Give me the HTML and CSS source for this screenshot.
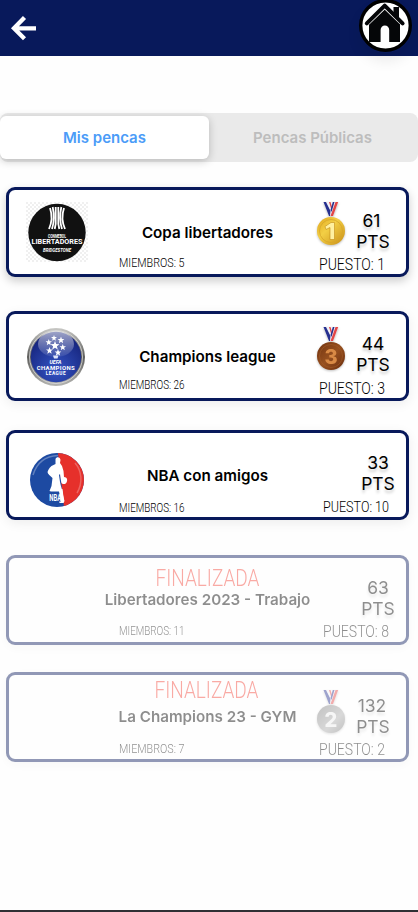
FILE: index.html
```html
<!DOCTYPE html>
<html lang="es">
<head>
<meta charset="utf-8">
<meta name="viewport" content="width=device-width, initial-scale=1">
<title>Mis pencas</title>
<link rel="stylesheet" href="styles.css">
</head>
<body>
<svg class="defs" aria-hidden="true">
  <defs>
    <linearGradient id="gold" x1="0" y1="0" x2="1" y2="1"><stop offset="0" stop-color="#dfa51c"/><stop offset=".4" stop-color="#f3cf45"/><stop offset="1" stop-color="#c98e16"/></linearGradient>
    <linearGradient id="bronze" x1="0" y1="0" x2="1" y2="1"><stop offset="0" stop-color="#70320f"/><stop offset=".5" stop-color="#97501f"/><stop offset="1" stop-color="#6b2d0d"/></linearGradient>
    <linearGradient id="silver" x1="0" y1="0" x2="1" y2="1"><stop offset="0" stop-color="#777"/><stop offset=".6" stop-color="#aaa"/><stop offset="1" stop-color="#777"/></linearGradient>
    <linearGradient id="steel" x1="0" y1="0" x2="0" y2="1"><stop offset="0" stop-color="#c9c9c6"/><stop offset=".5" stop-color="#5c5c5a"/><stop offset="1" stop-color="#b5b5b2"/></linearGradient>
    <linearGradient id="gloss" x1="0" y1="0" x2="0" y2="1"><stop offset="0" stop-color="#fff" stop-opacity=".6"/><stop offset="1" stop-color="#fff" stop-opacity=".08"/></linearGradient>
    <radialGradient id="blue" cx=".5" cy=".75" r=".7"><stop offset="0" stop-color="#3454c4"/><stop offset="1" stop-color="#16247c"/></radialGradient>
    <pattern id="checks" width="4" height="4" patternUnits="userSpaceOnUse"><path fill="#fff" d="M0 0h4v4H0z"/><path fill="#f0f0f0" d="M0 0h2v2H0zM2 2h2v2H2z"/></pattern>
    <clipPath id="ball"><circle cx="27" cy="27" r="27"/></clipPath>
    <symbol id="ribbon" viewBox="0 0 16 15">
      <path fill="#f2f2f6" d="M0.500 0h15L10 14H6z"/>
      <path fill="#e34646" d="M12.500 0h2.700L10 14H7.500z"/>
      <path fill="#e34646" d="M6 0h1.500l1.500 5-.8 2z"/>
      <path fill="#26308f" d="M.5 0H3l4.500 9-.5 5H6zM9.800 0h1.700L8.500 10 7.500 8z"/>
    </symbol>
    <symbol id="star" viewBox="0 0 10 10"><path fill="#fff" d="M5 0l1.300 3.400 3.700.1-2.900 2.300 1 3.700L5 7.400 1.900 9.500l1-3.700L0 3.500l3.700-.1z"/></symbol>
  </defs>
</svg>

<header class="bar">
  <a class="back" href="#" aria-label="Volver">
    <svg width="26" height="26" viewBox="0 0 26 26"><path d="M13.500 2.500L3 13.300l10.500 10.400M3 13.300h22" fill="none" stroke="#fff" stroke-width="4.300"/></svg>
  </a>
  <a class="home" href="#" aria-label="Inicio">
    <svg width="54" height="54" viewBox="0 0 54 54">
      <circle cx="26.500" cy="26.500" r="24.800" fill="#fff" stroke="#000" stroke-width="3.400"/>
      <path fill="#050608" d="M34.500 8h5.500v14l-5.500-5z"/>
      <path fill="#050608" d="M10 23.500L25.700 8 41 23.500V43H30.200V31a4.300 4.500 0 0 0-8.600 0V43H10z"/>
      <path d="M7.500 25.800L25.700 8.300l18.300 17.500" fill="none" stroke="#fff" stroke-width="3.600"/>
      <path d="M7.800 24.300L25.700 6.600 43.600 24.300" fill="none" stroke="#050608" stroke-width="4" stroke-linecap="round" stroke-linejoin="round"/>
    </svg>
  </a>
</header>

<nav class="tabs">
  <a class="tab tab-active" href="#">Mis pencas</a>
  <a class="tab" href="#">Pencas Públicas</a>
</nav>

<main class="list">
  <section class="card libertadores">
    <div class="logo">
      <svg width="62" height="60" viewBox="0 0 62 60">
        <path fill="url(#checks)" d="M0 0h62v60H0z"/>
        <circle cx="31" cy="30.500" r="28.700" fill="#111"/>
        <g fill="none" stroke="#fff" stroke-width="1.800"><path d="M24 6c2 6 3 12-1 21M26.700 5c1.500 7 1.500 15-.7 22M29.700 5v17l-1 5M32.300 5v17l1 5M35.300 5c-1.500 7-1.500 15 .7 22M38 6c-2 6-3 12 1 21"/></g>
        <text class="logo-text" x="31" y="35.500" font-size="4.500" textLength="18" lengthAdjust="spacingAndGlyphs">CONMEBOL</text>
        <text class="logo-text" x="31" y="42.300" font-size="7" textLength="51" lengthAdjust="spacingAndGlyphs">LIBERTADORES</text>
        <text class="logo-text logo-script" x="31" y="49.500" font-size="5.500" textLength="28" lengthAdjust="spacingAndGlyphs">BRIDGESTONE</text>
      </svg>
    </div>
    <div class="info">
      <h2 class="title">Copa libertadores</h2>
      <svg class="members" width="66" height="14"><text class="narrow" x="0" y="12" font-size="13.500" textLength="65.500" lengthAdjust="spacingAndGlyphs">MIEMBROS: 5</text></svg>
    </div>
    <div class="score">
      <svg class="medal" width="28" height="45" viewBox="0 0 28 45"><use href="#ribbon" x="6" y="0" width="16" height="15"/><circle cx="14" cy="29" r="14" fill="url(#gold)"/><circle cx="14" cy="29" r="11.500" fill="none" stroke="#d6a62a" stroke-width=".8"/><path fill="#fff0a0" stroke="#c18b17" stroke-width=".6" d="M8 24.500l6-4h3.500v17h-4.500V25.500l-4 2z"/></svg>
      <p class="points">61<br>PTS</p>
      <svg class="rank" width="67" height="17"><text class="narrow" x="0" y="14.500" font-size="16.500" textLength="66" lengthAdjust="spacingAndGlyphs">PUESTO: 1</text></svg>
    </div>
  </section>

  <section class="card champions">
    <div class="logo">
      <svg width="60" height="60" viewBox="0 0 60 60">
        <circle cx="30" cy="30" r="29" fill="url(#steel)"/><circle cx="30" cy="30" r="26.500" fill="none" stroke="#ddd" stroke-width=".8"/>
        <circle cx="30" cy="30" r="25.200" fill="url(#blue)"/>
        <ellipse cx="30" cy="17" rx="18" ry="13" fill="url(#gloss)"/>
        <use href="#star" x="24.500" y="14" width="9" height="9"/><use href="#star" x="19.500" y="12" width="6.500" height="6.500"/><use href="#star" x="31.500" y="9.500" width="7" height="7"/><use href="#star" x="25" y="8" width="6" height="6"/><use href="#star" x="33.500" y="17" width="6.500" height="6.500"/><use href="#star" x="20" y="20" width="7" height="7"/><use href="#star" x="28.500" y="22" width="7" height="7"/>
        <path d="M27 28.500h5.500l-1 3h-3.500z" fill="#dfe5fa"/>
        <text class="logo-text logo-script" x="29.500" y="36.500" font-size="5.500" textLength="12" lengthAdjust="spacingAndGlyphs">UEFA</text>
        <text class="logo-text" x="29.700" y="42.700" font-size="6" textLength="38" lengthAdjust="spacing">CHAMPIONS</text>
        <text class="logo-text" x="29.700" y="47.700" font-size="4.800" textLength="20" lengthAdjust="spacing">LEAGUE</text>
      </svg>
    </div>
    <div class="info">
      <h2 class="title">Champions league</h2>
      <svg class="members" width="66" height="14"><text class="narrow" x="0" y="12" font-size="13" textLength="65.500" lengthAdjust="spacingAndGlyphs">MIEMBROS: 26</text></svg>
    </div>
    <div class="score">
      <svg class="medal" width="28" height="45" viewBox="0 0 28 45"><use href="#ribbon" x="6" y="0" width="16" height="15"/><circle cx="14" cy="29" r="14" fill="url(#bronze)"/><circle cx="14" cy="29" r="11.500" fill="none" stroke="#a25c29" stroke-width=".6"/><text class="medal-number" x="14" y="36.500" fill="#d98a45">3</text></svg>
      <p class="points">44<br>PTS</p>
      <svg class="rank" width="67" height="17"><text class="narrow" x="0" y="14.500" font-size="16.500" textLength="66" lengthAdjust="spacingAndGlyphs">PUESTO: 3</text></svg>
    </div>
  </section>

  <section class="card nba">
    <div class="logo">
      <svg width="54" height="54" viewBox="0 0 54 54">
        <g clip-path="url(#ball)"><path fill="#1d4aa2" d="M0 0h54v54H0z"/><path fill="#e6302b" d="M28 0h26v54H34z"/>
        <path fill="#fff" d="M25.500 6c1-3 5-2 5 1l-.5 3 2 3 1.500 5 .5 6c3 0 4 3 2.500 5.500-1 2-4 2-5 .5l-.5-2-1-7-1 1 1 7c1 5 2.500 8 3 13l1.500 6-1 2h-4l-1-6-9-6 2-5 1-8c-2-2-5-4-5-6 1-3 3-6 6-7l2-1z"/>
        <path fill="#1d4aa2" d="M10 38.500h19l2 10H10z"/><path fill="#fff" d="M29.500 36h3l1.500 12-1 2h-2z"/></g>
        <path d="M3 22C7 9 16 3 28 2.500" fill="none" stroke="#fff" stroke-opacity=".3" stroke-width="1.500"/>
        <path d="M45 10c7 8 8 20 2 30" fill="none" stroke="#fff" stroke-opacity=".25" stroke-width="1.500"/>
        <text class="logo-text" x="25.300" y="47.500" font-size="8.500" textLength="12" lengthAdjust="spacingAndGlyphs">NBA</text>
      </svg>
    </div>
    <div class="info">
      <h2 class="title">NBA con amigos</h2>
      <svg class="members" width="66" height="14"><text class="narrow" x="0" y="12" font-size="13" textLength="65.500" lengthAdjust="spacingAndGlyphs">MIEMBROS: 16</text></svg>
    </div>
    <div class="score">
      <p class="points">33<br>PTS</p>
      <svg class="rank" width="67" height="17"><text class="narrow" x="0" y="14.500" font-size="15.500" textLength="66" lengthAdjust="spacingAndGlyphs">PUESTO: 10</text></svg>
    </div>
  </section>

  <section class="card trabajo finished">
    <div class="info">
      <svg class="status" width="105" height="22"><text class="narrow" x="0.500" y="20" font-size="24.500" textLength="104" lengthAdjust="spacingAndGlyphs">FINALIZADA</text></svg>
      <h2 class="title">Libertadores 2023 - Trabajo</h2>
      <svg class="members" width="66" height="14"><text class="narrow" x="0" y="12" font-size="13" textLength="65.500" lengthAdjust="spacingAndGlyphs">MIEMBROS: 11</text></svg>
    </div>
    <div class="score">
      <p class="points">63<br>PTS</p>
      <svg class="rank" width="67" height="17"><text class="narrow" x="0" y="14.500" font-size="16.500" textLength="66" lengthAdjust="spacingAndGlyphs">PUESTO: 8</text></svg>
    </div>
  </section>

  <section class="card gym finished">
    <div class="info">
      <svg class="status" width="105" height="22"><text class="narrow" x="-0.500" y="20" font-size="24.500" textLength="104" lengthAdjust="spacingAndGlyphs">FINALIZADA</text></svg>
      <h2 class="title">La Champions 23 - GYM</h2>
      <svg class="members" width="66" height="14"><text class="narrow" x="0" y="12" font-size="13.500" textLength="65.500" lengthAdjust="spacingAndGlyphs">MIEMBROS: 7</text></svg>
    </div>
    <div class="score">
      <svg class="medal" width="28" height="45" viewBox="0 0 28 45"><use href="#ribbon" x="6" y="0" width="16" height="15"/><circle cx="14" cy="29" r="14" fill="url(#silver)"/><text class="medal-number" x="14" y="36.500" fill="#eee">2</text></svg>
      <p class="points">132<br>PTS</p>
      <svg class="rank" width="67" height="17"><text class="narrow" x="0" y="14.500" font-size="16.500" textLength="66" lengthAdjust="spacingAndGlyphs">PUESTO: 2</text></svg>
    </div>
  </section>
</main>
</body>
</html>
```
FILE: styles.css
```css
* { box-sizing: border-box; }

body {
  margin: 0;
  height: 912px;
  overflow: hidden;
  background: #fefefe;
  border-bottom: 2px solid #303034;
  font-family: Inter, "Liberation Sans", sans-serif;
  color: #000;
}

svg { display: block; overflow: visible; }
.defs { width: 0; height: 0; position: absolute; }

.bar {
  display: flex;
  align-items: flex-start;
  justify-content: space-between;
  height: 56px;
  padding: 0 5px 0 11px;
  background: #08195b;
}
.back { margin-top: 15px; }
.home { margin-top: -1px; border-radius: 50%; box-shadow: 0 8px 14px rgba(0, 0, 0, .08); }

.tabs {
  display: grid;
  grid-template-columns: 209px 209px;
  height: 49px;
  margin-top: 57px;
  padding: 3px 0;
  border-radius: 8px;
  background: #eaeaea;
}
.tab {
  display: flex;
  align-items: center;
  justify-content: center;
  height: 43px;
  padding-right: 2px;
  border-radius: 6px;
  color: #bdbdbd;
  font-size: 15px;
  font-weight: 600;
  text-decoration: none;
}
.tab-active {
  padding-right: 0;
  background: #fff;
  color: #4b9cf8;
  box-shadow: 0 2px 8px rgba(0, 0, 0, .22);
}

.list { padding: 25px 9px 0 6px; }

.card {
  display: grid;
  grid-template-columns: 87px 223px 1fr;
  height: 90px;
  border: 3px solid #08195b;
  border-radius: 9px;
  background: #fff;
  box-shadow: 0 3px 12px rgba(0, 0, 0, .07);
}
.libertadores { box-shadow: 0 4px 10px rgba(0, 0, 0, .2); }
.champions { margin-top: 34px; }
.nba { margin-top: 29px; }
.trabajo { margin-top: 35px; }
.gym { margin-top: 27px; }
.finished { opacity: .44; }

.logo { grid-column: 1; padding: 12px 0 0 17px; }
.champions .logo { padding: 13px 0 0 17px; }
.nba .logo { padding: 20px 0 0 21px; }

.info {
  grid-column: 2;
  display: grid;
  grid-template-rows: 32px 20px 32px;
  min-width: 0;
}
.status { grid-row: 1; justify-self: center; margin-top: 8px; fill: #f34034; }
.gym .status { margin-top: 3px; }
.title {
  grid-row: 2;
  margin: 0;
  text-align: center;
  font-size: 15.2px;
  line-height: 20px;
  font-weight: 600;
  white-space: nowrap;
}
.libertadores .title, .champions .title, .nba .title { padding-top: 1px; }
.members { grid-row: 3; margin: 12.5px 0 0 23px; }
.champions .members { margin-top: 11px; }
.nba .members { margin-top: 15px; }
.gym .members { margin-top: 13.5px; }

.score {
  grid-column: 3;
  display: grid;
  grid-template-columns: 28px 50px;
  grid-template-rows: 65px 17px;
  margin-left: -2px;
}
.medal { grid-area: 1 / 1; margin-top: 12px; filter: drop-shadow(0 1px 1px rgba(0, 0, 0, .25)); }
.champions .medal { margin-top: 13px; }
.gym .medal { margin-top: 15px; }
.points {
  grid-area: 1 / 2;
  margin: 21px 0 0 6px;
  text-align: center;
  font-size: 17.5px;
  font-weight: 400;
  line-height: 20.500px;
  text-shadow: 0 3px 3px rgba(0, 0, 0, .2);
}
.libertadores .points { text-indent: -3px; }
.gym .points { text-indent: -2px; }
.champions .points { margin-top: 20px; }
.nba .points, .trabajo .points { margin: 20px -5px 0 11px; }
.rank { grid-area: 2 / 1 / 3 / 3; margin-left: 2px; }
.nba .rank, .trabajo .rank { margin-left: 6px; margin-top: -1px; }

.narrow { font-family: Roboto, "Liberation Sans", sans-serif; font-weight: 300; }
.logo-text { fill: #fff; text-anchor: middle; font-family: Roboto, sans-serif; font-weight: 700; }
.logo-script { font-style: italic; }
.medal-number { text-anchor: middle; font-family: Inter, sans-serif; font-size: 20px; font-weight: 800; }
```
